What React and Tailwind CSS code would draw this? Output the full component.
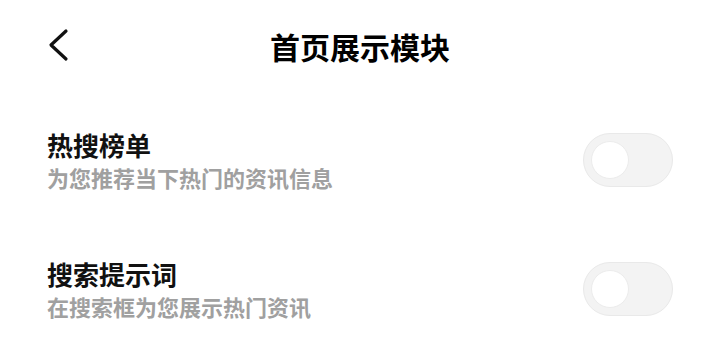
import React from 'react';

const ROWS = [
  { title: '热搜榜单', desc: '为您推荐当下热门的资讯信息' },
  { title: '搜索提示词', desc: '在搜索框为您展示热门资讯' },
];

function Toggle() {
  return (
    <div className="w-[90px] h-[54px] rounded-full bg-[#f3f3f3] border border-[#e9e9e9] flex items-center px-[7px] shrink-0">
      <div className="w-[38px] h-[38px] rounded-full bg-white border border-[#ececec]" />
    </div>
  );
}

export default function App() {
  return (
    <div
      className="w-[720px] h-[352px] bg-white overflow-hidden"
      style={{ fontFamily: '"Noto Sans CJK SC", "Noto Sans", sans-serif' }}
    >
      {/* Header */}
      <div className="relative h-[92px] flex items-center justify-center">
        <svg
          className="absolute left-[47px] top-[28px]"
          width="22"
          height="34"
          viewBox="0 0 22 34"
          fill="none"
        >
          <path d="M19 3 L4 17 L19 31" stroke="#111" strokeWidth="3.2" strokeLinecap="round" strokeLinejoin="round" />
        </svg>
        <h1 className="text-[30px] font-bold text-black leading-none">首页展示模块</h1>
      </div>

      {/* Rows */}
      {ROWS.map((row) => (
        <div key={row.title} className="h-[129px] pt-[7px] flex items-center justify-between pl-[47px] pr-[47px]">
          <div className="flex flex-col gap-[8px]">
            <div className="text-[26px] font-bold text-[#111] leading-none">{row.title}</div>
            <div className="text-[22px] font-bold text-[#a0a0a0] leading-none">{row.desc}</div>
          </div>
          <Toggle />
        </div>
      ))}
    </div>
  );
}
